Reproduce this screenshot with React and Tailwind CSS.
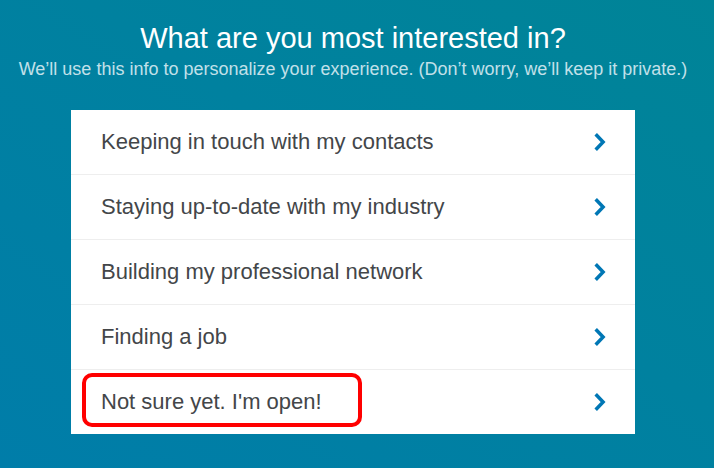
const options = [
  { label: "Keeping in touch with my contacts" },
  { label: "Staying up-to-date with my industry" },
  { label: "Building my professional network" },
  { label: "Finding a job" },
  { label: "Not sure yet. I'm open!", highlighted: true },
];

function Chevron() {
  return (
    <svg className="h-5 w-3 shrink-0" viewBox="0 0 12 20" fill="none" stroke="#0077b5" strokeWidth="3.5" aria-hidden="true">
      <path d="M1.7 2.3 9.1 10 1.7 17.7" />
    </svg>
  );
}

function Option({ label, highlighted }) {
  return (
    <li className="relative border-t border-[#eeeeee] first:border-t-0">
      <button type="button" className="flex h-16 w-full items-center justify-between pl-[30px] pr-[29px] text-left text-[22px] leading-7 text-[#434649]">
        {label}
        <Chevron />
      </button>
      {highlighted && (
        <span className="pointer-events-none absolute left-[11px] top-[3px] h-[54px] w-[280px] rounded-[10px] border-4 border-[#ff0000]" />
      )}
    </li>
  );
}

export default function App() {
  return (
    <main className="min-h-screen bg-linear-to-tr from-[#007da9] to-[#008497] pb-8 pr-2 pt-5 font-['Liberation_Sans',Arial,sans-serif]">
      <header className="text-center">
        <h1 className="text-[29px] leading-9 text-white">What are you most interested in?</h1>
        <p className="text-lg leading-[26px] text-[#c2e0e9]">
          We’ll use this info to personalize your experience. (Don’t worry, we’ll keep it private.)
        </p>
      </header>
      <ul className="mx-[71px] mt-7 bg-white">
        {options.map((option) => (
          <Option key={option.label} {...option} />
        ))}
      </ul>
    </main>
  );
}
